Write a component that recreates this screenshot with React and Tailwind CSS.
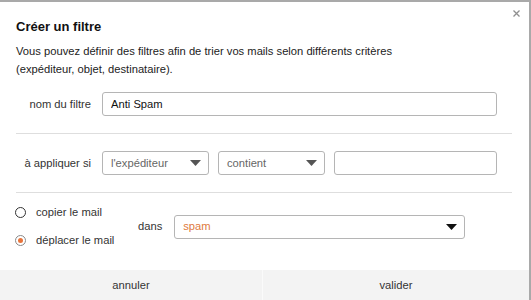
import { useState } from "react";

function Caret({ className }) {
  return (
    <svg width="11" height="6" viewBox="0 0 11 6" className={className}>
      <path d="M0 0 H11 L5.5 6 Z" fill="currentColor" />
    </svg>
  );
}

function Select({ value, className, textClass = "text-[#666]", caretClass = "text-[#555]" }) {
  return (
    <div
      className={`h-6 flex items-center justify-between pl-2 pr-[7px] border border-[#b5b5b5] rounded-[3px] bg-white ${className}`}
    >
      <span className={textClass}>{value}</span>
      <Caret className={caretClass} />
    </div>
  );
}

function Radio({ checked, label }) {
  return (
    <label className="flex items-center gap-[10px] leading-[17px] text-[#333]">
      <span
        className={`-ml-px w-[11px] h-[11px] rounded-full flex items-center justify-center border-[1.5px] ${
          checked ? "border-[#8a8a8a]" : "border-[#333]"
        }`}
      >
        {checked ? <span className="w-[5px] h-[5px] rounded-full bg-[#e8743b]" /> : null}
      </span>
      {label}
    </label>
  );
}

export default function App() {
  const [name, setName] = useState("Anti Spam");

  return (
    <div className="w-[531px] h-[300px] bg-white border-t-2 border-r-2 border-[#a9a9a9] flex flex-col font-['Liberation_Sans',Arial,sans-serif] text-[11.2px] text-[#222]">
      <div className="relative flex-1 pl-4 pr-[17px]">
        <button className="absolute right-[9px] top-[8px] text-[#8f8f8f]">
          <svg width="7" height="7" viewBox="0 0 7 7">
            <path d="M0.5 0.5 L6.5 6.5 M6.5 0.5 L0.5 6.5" stroke="currentColor" strokeWidth="1.3" />
          </svg>
        </button>

        <h1 className="pt-[17px] text-[13px] leading-4 font-bold text-[#111]">Créer un filtre</h1>

        <p className="mt-[8px] leading-[17.5px]">
          Vous pouvez définir des filtres afin de trier vos mails selon différents critères
          <br />
          (expéditeur, objet, destinataire).
        </p>

        <div className="mt-[14px] flex items-center">
          <span className="w-[75px] text-right text-[#333]">nom du filtre</span>
          <input
            value={name}
            onChange={(e) => setName(e.target.value)}
            className="ml-[11px] w-[395px] h-6 px-2 border border-[#b5b5b5] rounded-[3px] text-[#111] outline-none"
          />
        </div>

        <div className="mt-[17px] h-px bg-[#dedede]" />

        <div className="mt-[17px] flex items-center">
          <span className="w-[75px] text-right text-[#333]">à appliquer si</span>
          <Select value="l'expéditeur" className="ml-[11px] w-[107px]" />
          <Select value="contient" className="ml-[9px] w-[107px]" />
          <input className="ml-[9px] w-[163px] h-6 px-2 border border-[#b5b5b5] rounded-[3px] outline-none" />
        </div>

        <div className="mt-[17px] h-px bg-[#dedede]" />

        <div className="mt-[11px] flex items-center">
          <div className="w-[122px] flex flex-col gap-[11px]">
            <Radio label="copier le mail" />
            <Radio checked label="déplacer le mail" />
          </div>
          <span className="text-[#333]">dans</span>
          <Select
            value="spam"
            className="ml-[12px] w-[291px]"
            textClass="text-[#e07a3c]"
            caretClass="text-[#111]"
          />
        </div>
      </div>

      <div className="h-[30px] flex bg-[#f3f3f3] text-[#333]">
        <button className="w-[262px] h-full">annuler</button>
        <div className="w-px bg-[#fafafa]" />
        <button className="flex-1 h-full">valider</button>
      </div>
    </div>
  );
}
